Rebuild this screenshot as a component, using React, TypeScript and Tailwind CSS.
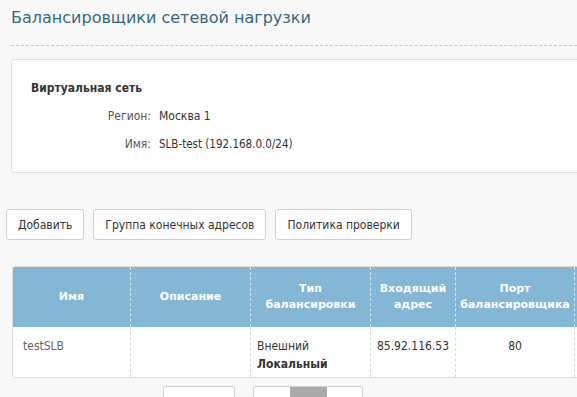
import React from "react";

const font = { fontFamily: '"DejaVu Sans Condensed", "DejaVu Sans", sans-serif' };

export default function App() {
  return (
    <div className="w-[577px] h-[397px] overflow-hidden bg-[#f8f8f8] text-[#333]" style={font}>
      <div className="pl-[11px]">
        <h1 className="pt-[8px] text-[16px] leading-[20px] text-[#37697c] font-normal" style={{ fontFamily: '"DejaVu Sans", sans-serif' }}>
          Балансировщики сетевой нагрузки
        </h1>
        <div className="mt-[17px] border-t border-dashed border-[#c8c8c8]" />
        <div className="mt-[13px] w-[600px] h-[114px] bg-white border border-[#e2e2e2] rounded-[3px] pl-[19px] pt-[20px]">
          <div className="text-[12px] font-bold leading-[16px]">Виртуальная сеть</div>
          <div className="mt-[12px] flex text-[12px] leading-[16px]">
            <div className="w-[120px] text-right text-[#555]">Регион:</div>
            <div className="pl-[8px]">Москва 1</div>
          </div>
          <div className="mt-[12px] flex text-[12px] leading-[16px]">
            <div className="w-[120px] text-right text-[#555]">Имя:</div>
            <div className="pl-[8px] text-[11.5px]">SLB-test (192.168.0.0/24)</div>
          </div>
        </div>
      </div>
      <div className="mt-[36px] pl-[6px] flex gap-[9px]">
        {["Добавить", "Группа конечных адресов", "Политика проверки"].map((t) => (
          <button key={t} className="h-[31px] px-[11px] bg-white border border-[#d0d0d0] rounded-[3px] text-[12px] text-[#333]">
            {t}
          </button>
        ))}
      </div>
      <div className="mt-[26px] ml-[12px] w-[620px] border border-[#dcdcdc] rounded-[3px] overflow-hidden">
        <div className="flex h-[60px] bg-[#84b6d6] text-white font-bold text-[11px] leading-[16px] text-center" style={{ fontFamily: '"DejaVu Sans", sans-serif' }}>
          <div className="w-[118px] flex items-center justify-center border-r border-dashed border-[#d8e6ef]">Имя</div>
          <div className="w-[120px] flex items-center justify-center border-r border-dashed border-[#d8e6ef]">Описание</div>
          <div className="w-[120px] flex items-center justify-center border-r border-dashed border-[#d8e6ef]">Тип<br />балансировки</div>
          <div className="w-[85px] flex items-center justify-center border-r border-dashed border-[#d8e6ef]">Входящий<br />адрес</div>
          <div className="w-[119px] flex items-center justify-center border-r border-dashed border-[#d8e6ef]">Порт<br />балансировщика</div>
          <div className="flex-1" />
        </div>
        <div className="flex h-[50px] bg-white text-[12px] leading-[18px]">
          <div className="w-[118px] pl-[10px] pt-[10px] text-[#666] border-r border-dashed border-[#d8d8d8]">testSLB</div>
          <div className="w-[120px] border-r border-dashed border-[#d8d8d8]" />
          <div className="w-[120px] pl-[6px] pt-[10px] border-r border-dashed border-[#d8d8d8]">
            <div>Внешний</div>
            <div className="font-bold">Локальный</div>
          </div>
          <div className="w-[85px] pt-[10px] text-center border-r border-dashed border-[#d8d8d8]">85.92.116.53</div>
          <div className="w-[119px] pt-[10px] text-center border-r border-dashed border-[#d8d8d8]">80</div>
          <div className="flex-1" />
        </div>
      </div>
      <div className="mt-[8px] flex">
        <div className="ml-[163px] w-[72px] h-[20px] bg-white border border-[#d0d0d0] rounded-[3px]" />
        <div className="ml-[18px] w-[110px] h-[20px] bg-white border border-[#d0d0d0] rounded-[3px] flex overflow-hidden">
          <div className="w-[36px]" />
          <div className="w-[37px] bg-[#aaaaaa]" />
        </div>
      </div>
    </div>
  );
}
